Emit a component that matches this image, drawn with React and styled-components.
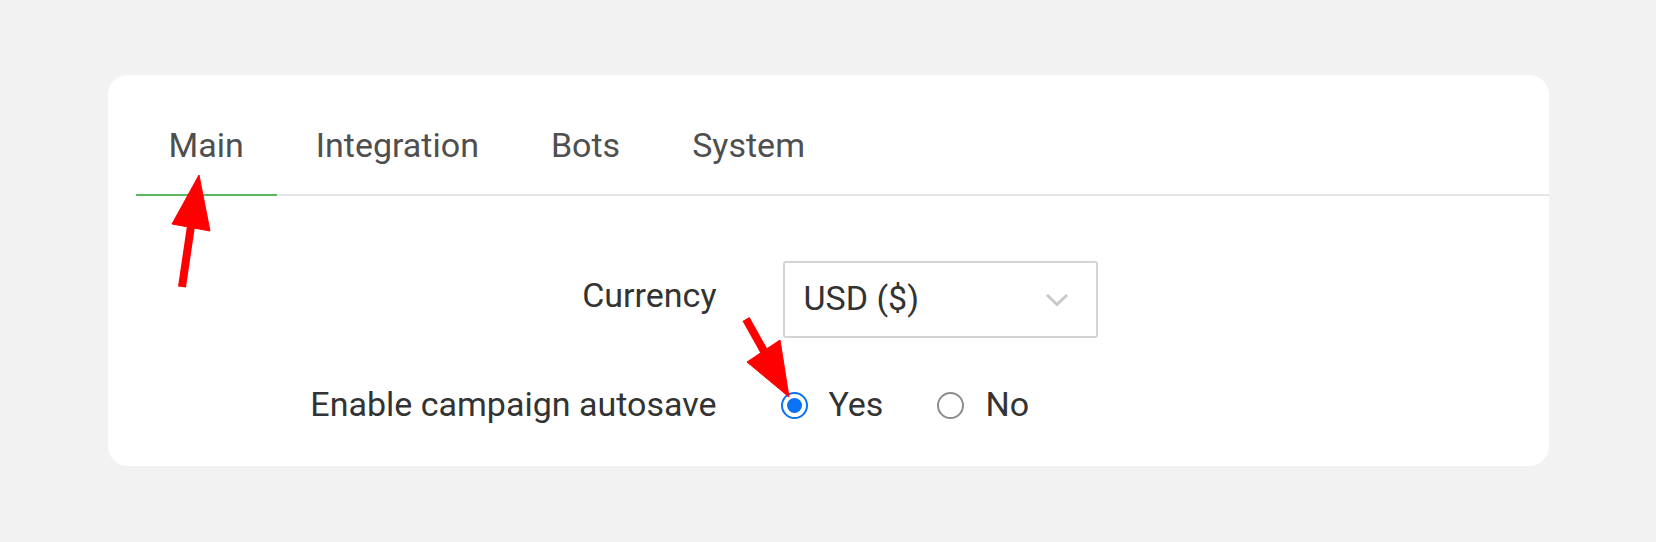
import { useState } from "react";
import styled, { createGlobalStyle } from "styled-components";

const TABS = ["Main", "Integration", "Bots", "System"];

export default function App() {
  //state
  const [activeTab, setActiveTab] = useState("Main");
  const [autosave, setAutosave] = useState("yes");

  //affichage
  return (
    <PageStyled>
      <GlobalStyle />
      <Card>
        <TabBar>
          {TABS.map((tab) => (
            <Tab key={tab} $active={tab === activeTab} onClick={() => setActiveTab(tab)}>
              {tab}
            </Tab>
          ))}
        </TabBar>
        <Form>
          <Label $raise={10}>Currency</Label>
          <Select>
            <span>USD ($)</span>
            <svg width="24" height="14" viewBox="0 0 24 14">
              <polyline points="2,2 12,11.5 22,2" fill="none" stroke="#c9c9c9" strokeWidth="3" />
            </svg>
          </Select>
          <Label>Enable campaign autosave</Label>
          <RadioGroup>
            <RadioOption onClick={() => setAutosave("yes")}>
              <Radio $checked={autosave === "yes"} />
              Yes
            </RadioOption>
            <RadioOption onClick={() => setAutosave("no")}>
              <Radio $checked={autosave === "no"} />
              No
            </RadioOption>
          </RadioGroup>
        </Form>
      </Card>
      <Annotations width="1656" height="542" viewBox="0 0 1656 542">
        <g fill="#ff0000" stroke="#ff0000">
          <line x1="182" y1="287" x2="191" y2="226" strokeWidth="8" />
          <polygon points="199,175 172,224 210,231" strokeWidth="1" />
          <line x1="746" y1="319" x2="765" y2="353" strokeWidth="8" />
          <polygon points="789,397 747,362 780,340" strokeWidth="1" />
        </g>
      </Annotations>
    </PageStyled>
  );
}

const GlobalStyle = createGlobalStyle`
  body {
    margin: 0;
    background: #f2f2f2;
    font-family: Roboto, "Liberation Sans", sans-serif;
  }
`;

const PageStyled = styled.div`
  position: relative;
  height: 542px;
  padding-top: 75px;
  box-sizing: border-box;
`;

const Card = styled.div`
  width: 1441px;
  margin: 0 auto;
  background: #ffffff;
  border-radius: 20px;
  padding: 50px 0 42px;
  box-sizing: border-box;
  height: 391px;
`;

const TabBar = styled.div`
  display: flex;
  gap: 6px;
  margin-left: 28px;
  border-bottom: 2px solid #e6e6e6;
`;

const Tab = styled.div`
  padding: 0 33px 29px;
  margin-bottom: -2px;
  font-size: 34px;
  line-height: 40px;
  color: #4f4f4f;
  cursor: pointer;
  border-bottom: 2px solid ${(p) => (p.$active ? "#5cb85c" : "transparent")};
`;

const Form = styled.div`
  display: grid;
  grid-template-columns: 609px auto;
  grid-template-rows: 77px 40px;
  column-gap: 66px;
  row-gap: 46px;
  align-items: center;
  padding-top: 65px;
  font-size: 34px;
  line-height: 40px;
  color: #333333;
`;

const Label = styled.div`
  justify-self: end;
  margin-bottom: ${(p) => p.$raise || 0}px;
`;

const Select = styled.div`
  display: flex;
  justify-content: space-between;
  align-items: center;
  width: 315px;
  height: 77px;
  box-sizing: border-box;
  padding: 0 27px 0 19px;
  border: 2px solid #d4d4d4;
  border-radius: 3px;
  color: #333333;

  span {
    margin-bottom: 4px;
  }
`;

const RadioGroup = styled.div`
  display: flex;
  align-items: center;
  gap: 54px;
  margin-left: -2px;
`;

const RadioOption = styled.label`
  display: flex;
  align-items: center;
  gap: 21px;
  cursor: pointer;
`;

const Radio = styled.span`
  position: relative;
  width: 27px;
  height: 27px;
  margin-top: 2px;
  box-sizing: border-box;
  border-radius: 50%;
  border: 2px solid ${(p) => (p.$checked ? "#0a72f5" : "#8c8c8c")};

  &::after {
    content: "";
    display: ${(p) => (p.$checked ? "block" : "none")};
    position: absolute;
    inset: 4px;
    border-radius: 50%;
    background: #0a72f5;
  }
`;

const Annotations = styled.svg`
  position: absolute;
  top: 0;
  left: 0;
  pointer-events: none;
`;
